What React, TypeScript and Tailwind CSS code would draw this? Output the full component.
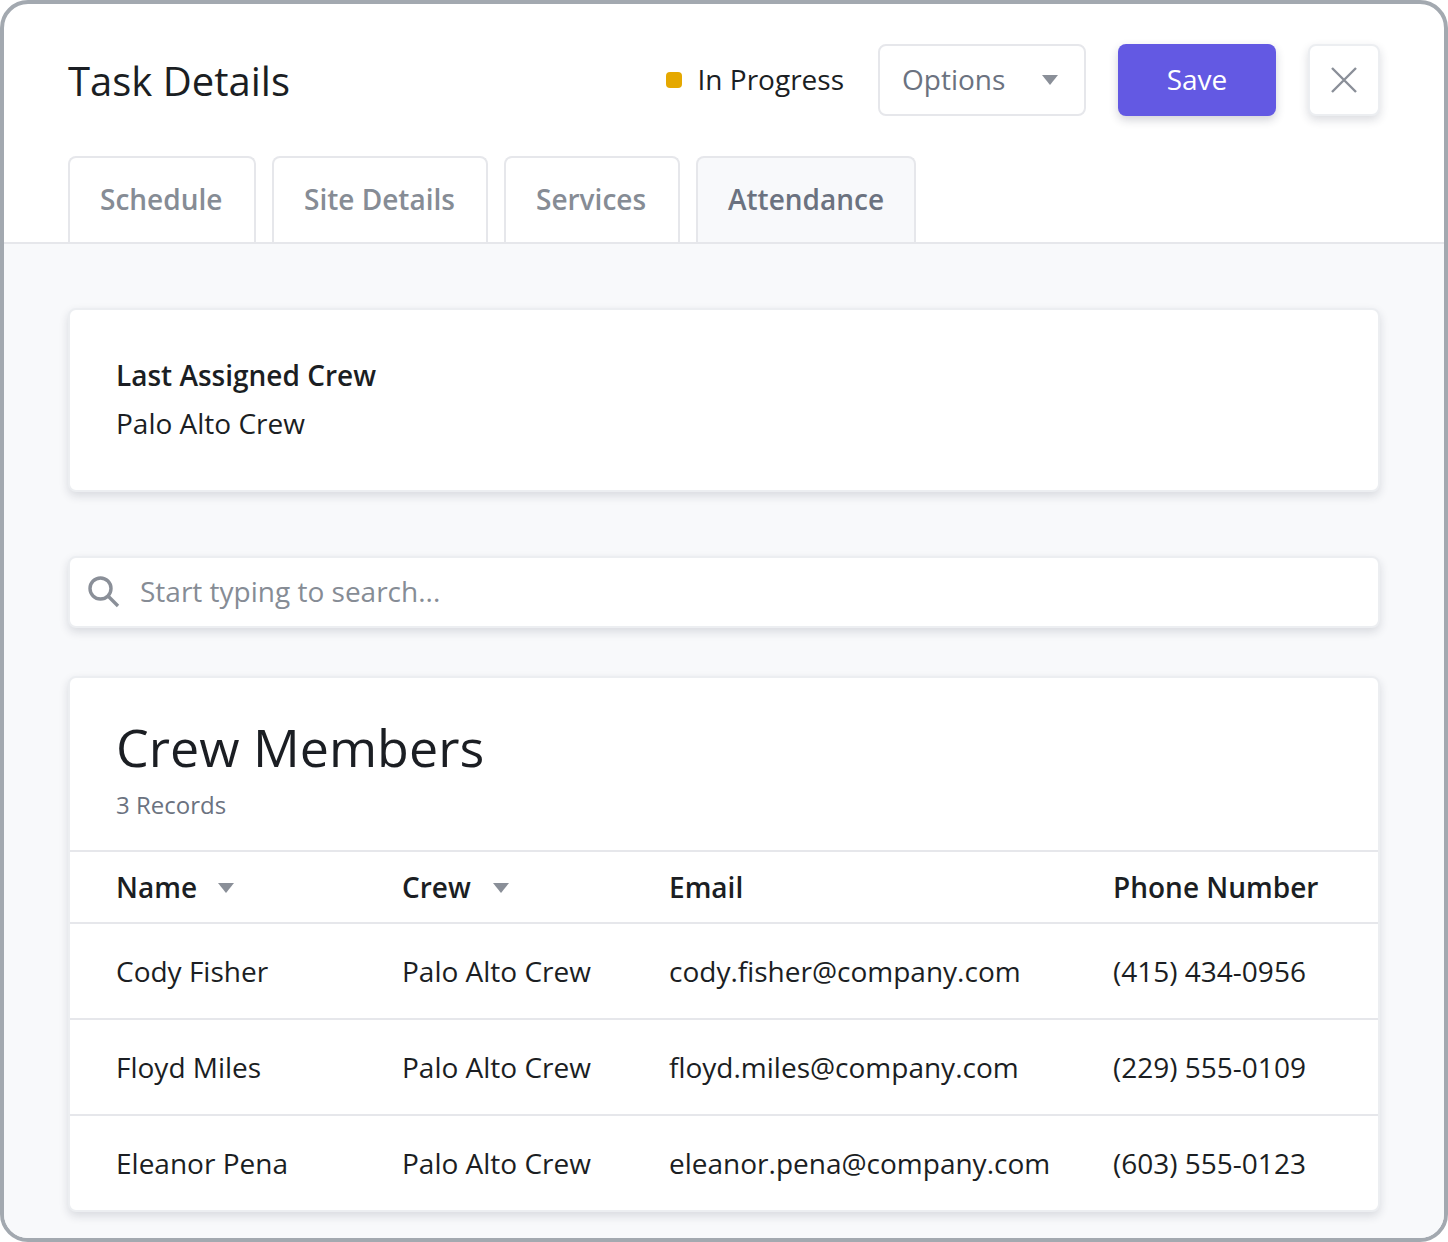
const tabs = [
  { label: 'Schedule', width: 'w-[188px]' },
  { label: 'Site Details', width: 'w-[216px]' },
  { label: 'Services', width: 'w-[176px]' },
  { label: 'Attendance', width: 'w-[220px]' },
];

const members = [
  { name: 'Cody Fisher', crew: 'Palo Alto Crew', email: 'cody.fisher@company.com', phone: '(415) 434-0956' },
  { name: 'Floyd Miles', crew: 'Palo Alto Crew', email: 'floyd.miles@company.com', phone: '(229) 555-0109' },
  { name: 'Eleanor Pena', crew: 'Palo Alto Crew', email: 'eleanor.pena@company.com', phone: '(603) 555-0123' },
];

const Caret = ({ className }: { className: string }) => (
  <svg viewBox="0 0 16 10" className={className} fill="#8a8f98">
    <path d="M0 0h16L8 10z" />
  </svg>
);

export default function App() {
  return (
    <div className="h-[1242px] w-[1448px] overflow-hidden rounded-[28px] border-4 border-[#a3a9b0] bg-white font-['Open_Sans',sans-serif] text-[28px] leading-[48px] text-[#1b1e23]">
      {/* Header */}
      <div className="flex h-[240px] flex-col justify-between border-b-2 border-[#e6e7eb] px-16 pt-10">
        <div className="flex h-[72px] items-center">
          <h1 className="pt-[2px] text-[40px] leading-[72px] font-normal">Task Details</h1>
          <div className="ml-auto flex items-center">
            <span className="h-4 w-4 rounded-[4px] bg-[#e5a800]" />
            <span className="ml-4 -translate-y-px">In Progress</span>
            <div className="ml-[34px] flex h-[72px] w-[208px] items-center rounded-lg border-2 border-[#e6e7eb] pl-[22px] text-[#6b7280]">
              <span className="-translate-y-px">Options</span>
              <Caret className="ml-[37px] h-[10px] w-4" />
            </div>
            <button className="ml-8 h-[72px] w-[158px] rounded-lg bg-[#6359e3] text-white shadow-[0_4px_10px_rgba(30,35,60,0.2)]">
              <span className="block -translate-y-px">Save</span>
            </button>
            <button className="ml-8 flex h-[72px] w-[72px] items-center justify-center rounded-lg border-2 border-[#eceef1] bg-white shadow-[0_4px_10px_rgba(30,35,60,0.16)]">
              <svg viewBox="0 0 26 26" className="h-[26px] w-[26px]" stroke="#8a8f98" strokeWidth="2.4" fill="none">
                <path d="M1 1l24 24M25 1L1 25" />
              </svg>
            </button>
          </div>
        </div>
        <div className="flex gap-4">
          {tabs.map((tab) => (
            <div
              key={tab.label}
              className={`flex h-[86px] items-start rounded-t-lg border-2 border-b-0 border-[#e6e7eb] pt-[17px] pl-[30px] font-semibold whitespace-nowrap ${tab.width} ${
                tab.label === 'Attendance' ? 'bg-[#f8f9fb] text-[#6b7280]' : 'bg-white text-[#868c95]'
              }`}
            >
              {tab.label}
            </div>
          ))}
        </div>
      </div>

      {/* Body */}
      <div className="flex h-[994px] flex-col bg-[#f8f9fb] px-16 pt-16">
        <div className="h-[184px] rounded-lg border-2 border-[#eceef1] bg-white px-[46px] pt-[41px] shadow-[0_4px_10px_rgba(30,35,60,0.14)]">
          <div className="font-semibold">Last Assigned Crew</div>
          <div>Palo Alto Crew</div>
        </div>

        <div className="mt-16 flex h-[72px] items-center rounded-lg border-2 border-[#eceef1] bg-white pl-[18px] text-[#868c95] shadow-[0_4px_10px_rgba(30,35,60,0.14)]">
          <svg viewBox="0 0 32 32" className="h-8 w-8" stroke="#8a8f98" fill="none" strokeWidth="3.4">
            <circle cx="12.5" cy="12.5" r="10.5" />
            <path d="M20 20l10 10" />
          </svg>
          <span className="ml-[20px] -translate-y-px">Start typing to search...</span>
        </div>

        <div className="mt-12 h-[536px] rounded-lg border-2 border-[#eceef1] bg-white shadow-[0_4px_10px_rgba(30,35,60,0.14)]">
          <div className="h-[172px] px-[46px] pt-[33px]">
            <h2 className="text-[52px] leading-[72px] font-normal">Crew Members</h2>
            <div className="mt-1 text-2xl leading-[36px] text-[#6b7280]">3 Records</div>
          </div>

          <div className="grid h-[74px] grid-cols-[286px_267px_444px_1fr] items-center border-y-2 border-[#e6e7eb] pl-[46px] font-semibold">
            <div className="flex items-center">
              Name
              <Caret className="mt-[2px] ml-[21px] h-[10px] w-4" />
            </div>
            <div className="flex items-center">
              Crew
              <Caret className="mt-[2px] ml-[22px] h-[10px] w-4" />
            </div>
            <div>Email</div>
            <div>Phone Number</div>
          </div>

          {members.map((m, i) => (
            <div
              key={m.email}
              className={`grid h-[96px] grid-cols-[286px_267px_444px_1fr] items-center border-b-2 pl-[46px] ${
                i < members.length - 1 ? 'border-[#e6e7eb]' : 'border-transparent'
              }`}
            >
              <div>{m.name}</div>
              <div>{m.crew}</div>
              <div>{m.email}</div>
              <div>{m.phone}</div>
            </div>
          ))}
        </div>
      </div>
    </div>
  );
}
